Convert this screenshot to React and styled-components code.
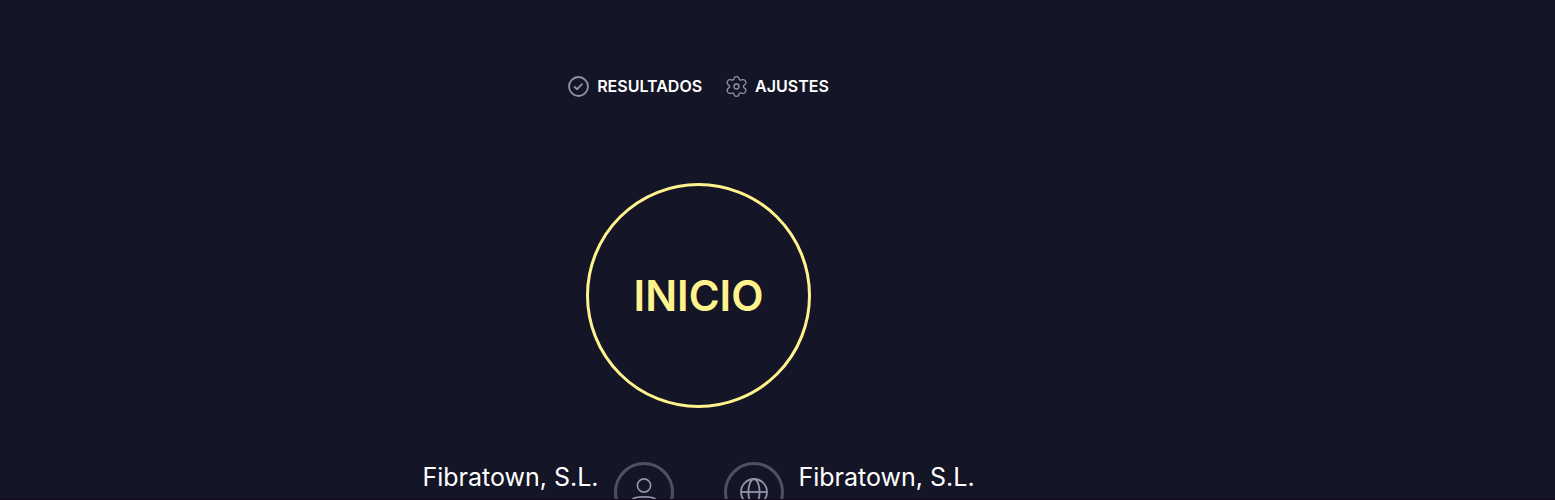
import React from "react";
import styled, { createGlobalStyle } from "styled-components";

const Global = createGlobalStyle`
    * {
        box-sizing: border-box;
    }
    body {
        margin: 0;
        background: #141526;
        color: #ffffff;
        font-family: Inter, "Open Sans", sans-serif;
    }
`

const IconoResultados = () => (
    <svg width="21" height="21" viewBox="0 0 21 21" fill="none" stroke="#9193a8" strokeLinecap="round" strokeLinejoin="round" aria-hidden="true">
        <circle cx="10.5" cy="10.5" r="9.5" strokeWidth="1.8" />
        <path d="M6.6 11 L9.2 13.2 L14 8.2" strokeWidth="1.9" />
    </svg>
)

const IconoAjustes = () => (
    <svg width="21" height="21" viewBox="0 0 21 21" fill="none" stroke="#9193a8" strokeWidth="1.3" strokeLinejoin="round" aria-hidden="true">
        <path d="M8.1 2.4 Q8.5 0.7 10.5 0.7 Q12.5 0.7 12.9 2.4 Q13.4 4.6 15.5 3.9 Q17.8 3.2 18.7 4.1 Q20.3 5.9 19.8 7.4 Q19.4 8.3 18.1 9.1 Q16.8 10.5 18.1 11.9 Q19.4 12.7 19.8 13.6 Q20.3 15.1 18.7 16.9 Q17.8 17.8 15.5 17.1 Q13.4 16.4 12.9 18.6 Q12.5 20.3 10.5 20.3 Q8.5 20.3 8.1 18.6 Q7.6 16.4 5.5 17.1 Q3.2 17.8 2.3 16.9 Q0.7 15.1 1.2 13.6 Q1.6 12.7 2.9 11.9 Q4.2 10.5 2.9 9.1 Q1.6 8.3 1.2 7.4 Q0.7 5.9 2.3 4.1 Q3.2 3.2 5.5 3.9 Q7.6 4.6 8.1 2.4 Z" />
        <circle cx="10.5" cy="10.5" r="2.5" />
    </svg>
)

const IconoUsuario = () => (
    <svg width="28" height="28" viewBox="0 0 28 28" fill="none" stroke="#9193a8" strokeWidth="1.7" aria-hidden="true">
        <circle cx="14" cy="7.5" r="6.6" />
        <path d="M1.6 26.5 V23 Q1.6 18.9 14 18.9 Q26.4 18.9 26.4 23 V26.5 Z" />
    </svg>
)

const IconoGlobo = () => (
    <svg width="28" height="28" viewBox="0 0 28 28" fill="none" stroke="#9193a8" strokeWidth="1.8" aria-hidden="true">
        <circle cx="14" cy="14" r="13" />
        <ellipse cx="14" cy="14" rx="5.6" ry="13" />
        <path d="M1 14 H27" />
    </svg>
)

const App = () => {
    return (
        <Pagina>
            <Global />
            <Menu>
                <Enlace href="#resultados"><IconoResultados />RESULTADOS</Enlace>
                <Enlace href="#ajustes"><IconoAjustes />AJUSTES</Enlace>
            </Menu>
            <Boton type="button">INICIO</Boton>
            <Conexion>
                <Extremo className="proveedor">
                    <Nombre>Fibratown, S.L.</Nombre>
                    <Circulo><IconoUsuario /></Circulo>
                </Extremo>
                <Extremo>
                    <Circulo><IconoGlobo /></Circulo>
                    <Nombre>Fibratown, S.L.</Nombre>
                </Extremo>
            </Conexion>
        </Pagina>
    )
}
export default App;

const Pagina = styled.main`
    height: 100vh;
    overflow: hidden;
    display: flex;
    flex-direction: column;
    align-items: center;
    padding: 76px 158px 0 0;
    border-bottom: 1px solid #140a1c;
`
const Menu = styled.nav`
    display: flex;
    flex-shrink: 0;
    gap: 24px;
`
const Enlace = styled.a`
    display: flex;
    align-items: center;
    gap: 8px;
    color: #ffffff;
    font-size: 16px;
    font-weight: 600;
    line-height: 21px;
    text-decoration: none;
`
const Boton = styled.button`
    flex-shrink: 0;
    width: 225px;
    height: 225px;
    margin: 86px 0 54px;
    padding: 0;
    border: 3px solid #fff38e;
    border-radius: 50%;
    background: transparent;
    color: #fff38e;
    font-family: inherit;
    font-size: 42px;
    font-weight: 600;
    cursor: pointer;
`
const Conexion = styled.section`
    display: grid;
    flex-shrink: 0;
    grid-template-columns: 1fr 1fr;
    gap: 50px;
    width: 100%;
`
const Extremo = styled.div`
    display: flex;
    gap: 15px;

    &.proveedor {
        justify-content: flex-end;
    }
`
const Nombre = styled.h2`
    margin: 0;
    font-size: 25px;
    font-weight: 400;
    line-height: 30px;
`
const Circulo = styled.span`
    display: flex;
    align-items: center;
    justify-content: center;
    width: 60px;
    height: 60px;
    border: 3px solid #4f5063;
    border-radius: 50%;
`
